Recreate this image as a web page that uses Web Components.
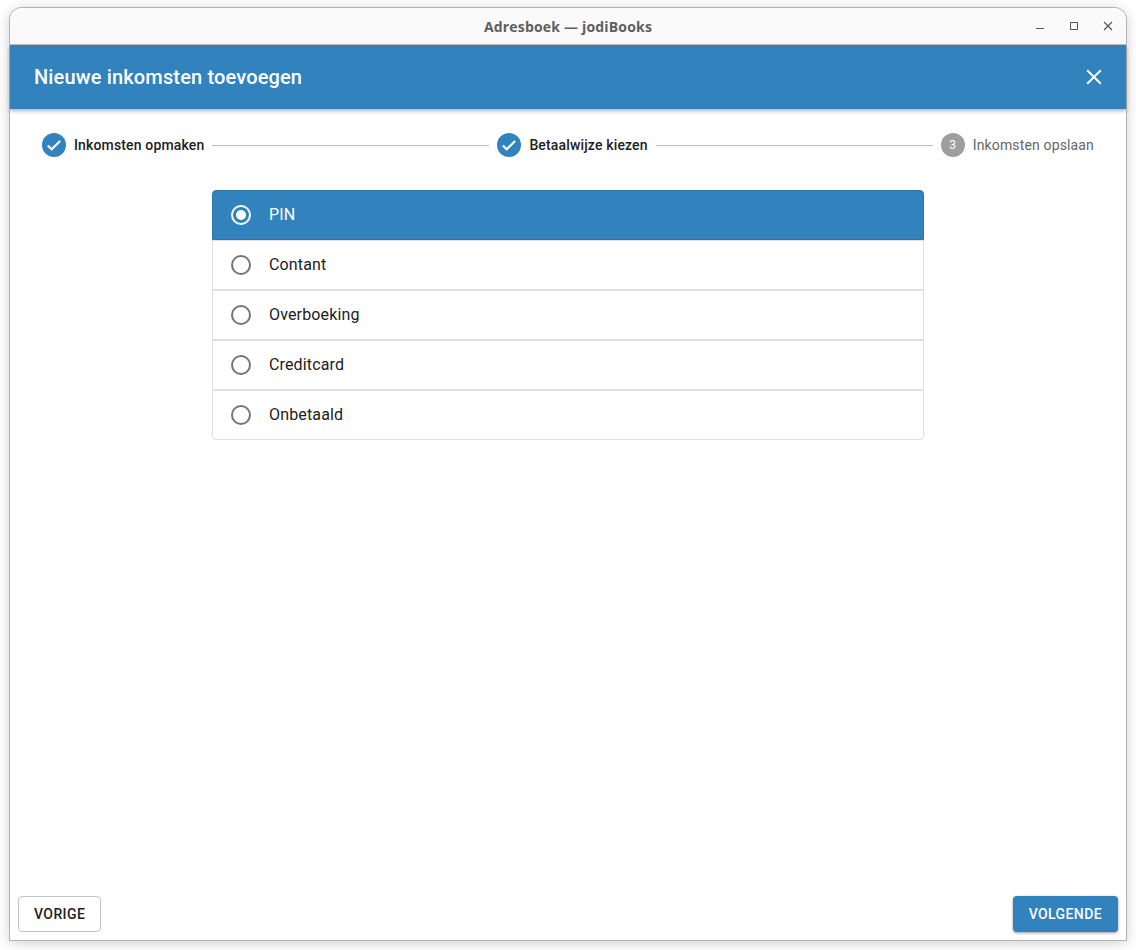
<!DOCTYPE html>
<html lang="nl">
<head>
<meta charset="utf-8">
<title>Adresboek — jodiBooks</title>
<style>
	html, body { margin: 0; height: 100%; background: #fff; }
	body { font-family: Roboto, "Liberation Sans", sans-serif; overflow: hidden; }
</style>
</head>
<body>
<app-window title="Adresboek — jodiBooks">
	<dialog-header>Nieuwe inkomsten toevoegen</dialog-header>
	<step-bar>
		<step-item state="done">Inkomsten opmaken</step-item>
		<step-item state="done">Betaalwijze kiezen</step-item>
		<step-item number="3">Inkomsten opslaan</step-item>
	</step-bar>
	<choice-group>
		<choice-row selected>PIN</choice-row>
		<choice-row>Contant</choice-row>
		<choice-row>Overboeking</choice-row>
		<choice-row>Creditcard</choice-row>
		<choice-row>Onbetaald</choice-row>
	</choice-group>
	<footer-bar>
		<action-button>VORIGE</action-button>
		<action-button primary>VOLGENDE</action-button>
	</footer-bar>
</app-window>

<script>
class AppWindow extends HTMLElement {
	constructor() {
		super();
		this.attachShadow({ mode: 'open' });
		this.shadowRoot.innerHTML = `
			<style>
				:host {
					display: flex;
					flex-direction: column;
					height: 932px;
					margin: 8px 10px 10px;
					background: #fff;
					border-radius: 12px 12px 0 0;
					box-shadow: 0 0 0 1px #b5b5b5, 0 2px 14px rgba(0, 0, 0, .22);
				}
				.titlebar {
					position: relative;
					display: flex;
					justify-content: center;
					align-items: center;
					flex: none;
					height: 37px;
					box-sizing: border-box;
					background: #fafafa;
					border-bottom: 1px solid #c4c4c4;
					border-radius: 12px 12px 0 0;
					font: 700 14px "Open Sans", "Noto Sans", sans-serif;
					letter-spacing: .18px;
					color: #5e5e5e;
				}
				.controls {
					position: absolute;
					right: 1px;
					top: 0;
					display: flex;
				}
				.controls svg { display: block; width: 34px; height: 36px; }
				main { display: flex; flex-direction: column; flex: 1; min-height: 0; }
			</style>
			<div class="titlebar">
				<span id="title"></span>
				<div class="controls">
					<svg viewBox="0 0 34 36" fill="none" stroke="#555" stroke-width="1"><path d="M13 20.5h8"/></svg>
					<svg viewBox="0 0 34 36" fill="none" stroke="#555" stroke-width="1"><path d="M13.5 14.5h7v7h-7z"/></svg>
					<svg viewBox="0 0 34 36" fill="none" stroke="#555" stroke-width="1.2"><path d="M13 14l8 8M21 14l-8 8"/></svg>
				</div>
			</div>
			<main><slot></slot></main>
		`;
	}

	connectedCallback() {
		this.shadowRoot.querySelector('#title').textContent = this.getAttribute('title');
	}
}

class DialogHeader extends HTMLElement {
	constructor() {
		super();
		this.attachShadow({ mode: 'open' });
		this.shadowRoot.innerHTML = `
			<style>
				:host {
					display: flex;
					align-items: center;
					justify-content: space-between;
					flex: none;
					height: 64px;
					padding: 0 24px;
					box-sizing: border-box;
					background: #3182bd;
					color: #fff;
					font: 500 20px Roboto, sans-serif;
					letter-spacing: .15px;
					box-shadow: 0 2px 4px rgba(0, 0, 0, .3);
					position: relative;
				}
				svg { display: block; width: 16px; height: 16px; }
			</style>
			<slot></slot>
			<svg viewBox="0 0 16 16" fill="none" stroke="#fff" stroke-width="2"><path d="M1.2 1.2l13.6 13.6M14.8 1.2L1.2 14.8"/></svg>
		`;
	}
}

class StepBar extends HTMLElement {
	constructor() {
		super();
		this.attachShadow({ mode: 'open' });
		this.shadowRoot.innerHTML = `
			<style>
				:host {
					display: flex;
					align-items: center;
					flex: none;
					padding: 24px;
				}
			</style>
			<slot></slot>
		`;
	}
}

class StepItem extends HTMLElement {
	constructor() {
		super();
		this.attachShadow({ mode: 'open' });
		this.shadowRoot.innerHTML = `
			<style>
				:host { display: flex; align-items: center; flex: 1 1 auto; }
				:host(:last-child) { flex: none; }
				.step { display: flex; align-items: center; flex: none; padding: 0 8px; }
				.icon {
					display: flex;
					align-items: center;
					justify-content: center;
					width: 24px;
					height: 24px;
					margin-right: 8px;
					border-radius: 50%;
					background: #9e9e9e;
					color: #fff;
					font: 400 12px Roboto, sans-serif;
				}
				:host([state=done]) .icon { background: #3182bd; }
				svg { display: block; width: 24px; height: 24px; }
				.label { font: 400 14px Roboto, sans-serif; letter-spacing: .15px; color: #666; white-space: nowrap; }
				:host([state=done]) .label { font-weight: 500; color: #212121; }
				.line { flex: 1; border-top: 1px solid #bdbdbd; }
				:host(:last-child) .line { display: none; }
			</style>
			<div class="step">
				<div class="icon"></div>
				<span class="label"><slot></slot></span>
			</div>
			<div class="line"></div>
		`;
	}

	connectedCallback() {
		const icon = this.shadowRoot.querySelector('.icon');
		if (this.getAttribute('state') === 'done') {
			icon.innerHTML = '<svg viewBox="0 0 24 24" fill="none" stroke="#fff" stroke-width="2.1"><path d="M5.8 12.4l3.9 3.9 8.4-8.4"/></svg>';
		} else {
			icon.textContent = this.getAttribute('number');
		}
	}
}

class ChoiceGroup extends HTMLElement {
	constructor() {
		super();
		this.attachShadow({ mode: 'open' });
		this.shadowRoot.innerHTML = `
			<style>
				:host {
					display: flex;
					flex-direction: column;
					flex: none;
					width: 712px;
					margin: 9px auto 0;
				}
			</style>
			<slot></slot>
		`;
	}
}

class ChoiceRow extends HTMLElement {
	constructor() {
		super();
		this.attachShadow({ mode: 'open' });
		this.shadowRoot.innerHTML = `
			<style>
				:host {
					display: flex;
					align-items: center;
					gap: 18px;
					height: 50px;
					padding: 0 0 1px 18px;
					box-sizing: border-box;
					border: 1px solid #e0e0e0;
					background: #fff;
					color: #212121;
					font: 400 16px Roboto, sans-serif;
					letter-spacing: .15px;
				}
				:host(:first-child) { border-radius: 4px 4px 0 0; }
				:host(:last-child) { border-radius: 0 0 4px 4px; }
				:host([selected]) {
					background: #3182bd;
					border-color: #2b74a8;
					color: #fff;
				}
				svg { display: block; width: 20px; height: 20px; flex: none; margin-bottom: -1px; }
			</style>
			<svg viewBox="0 0 20 20" fill="none"></svg>
			<slot></slot>
		`;
	}

	connectedCallback() {
		const on = this.hasAttribute('selected');
		const colour = on ? '#fff' : '#757575';
		let dot = on ? `<circle cx="10" cy="10" r="5" fill="${colour}"/>` : '';
		this.shadowRoot.querySelector('svg').innerHTML = `<circle cx="10" cy="10" r="9" stroke="${colour}" stroke-width="2"/>` + dot;
	}
}

class FooterBar extends HTMLElement {
	constructor() {
		super();
		this.attachShadow({ mode: 'open' });
		this.shadowRoot.innerHTML = `
			<style>
				:host {
					display: flex;
					justify-content: space-between;
					margin-top: auto;
					padding: 8px;
				}
			</style>
			<slot></slot>
		`;
	}
}

class ActionButton extends HTMLElement {
	constructor() {
		super();
		this.attachShadow({ mode: 'open' });
		this.shadowRoot.innerHTML = `
			<style>
				:host {
					display: flex;
					align-items: center;
					height: 36px;
					padding: 0 15px;
					box-sizing: border-box;
					border: 1px solid #c4c4c4;
					border-radius: 4px;
					background: #fff;
					color: #212121;
					font: 500 14px Roboto, sans-serif;
					letter-spacing: .4px;
				}
				:host([primary]) {
					padding: 0 16px;
					border: 0;
					background: #3182bd;
					color: #fff;
					box-shadow: 0 1px 3px rgba(0, 0, 0, .4);
				}
			</style>
			<slot></slot>
		`;
	}
}

customElements.define('app-window', AppWindow);
customElements.define('dialog-header', DialogHeader);
customElements.define('step-bar', StepBar);
customElements.define('step-item', StepItem);
customElements.define('choice-group', ChoiceGroup);
customElements.define('choice-row', ChoiceRow);
customElements.define('footer-bar', FooterBar);
customElements.define('action-button', ActionButton);
</script>
</body>
</html>
